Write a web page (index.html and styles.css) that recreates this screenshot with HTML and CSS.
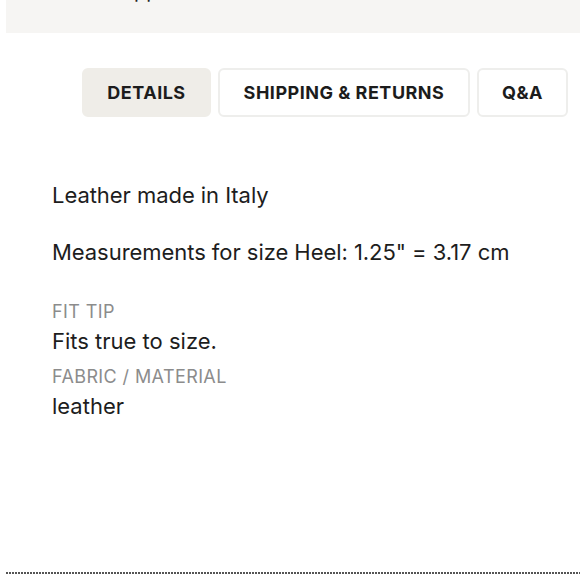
FILE: index.html
```html
<!DOCTYPE html>
<html>
<head>
<meta charset="utf-8">
<link rel="stylesheet" href="styles.css">
</head>
<body>
<div class="topband"><span class="cut">pp</span></div>
<div class="tabs">
  <div class="tab active">DETAILS</div>
  <div class="tab">SHIPPING &amp; RETURNS</div>
  <div class="tab">Q&amp;A</div>
</div>
<div class="content">
  <p class="para">Leather made in Italy</p>
  <p class="para">Measurements for size Heel: 1.25" = 3.17 cm</p>
  <div class="attr first">
    <div class="label">FIT TIP</div>
    <div class="value">Fits true to size.</div>
  </div>
  <div class="attr">
    <div class="label">FABRIC / MATERIAL</div>
    <div class="value">leather</div>
  </div>
</div>
<div class="dots"></div>
</body>
</html>
```

FILE: styles.css
```css
html, body {
  margin: 0;
  padding: 0;
  background: #ffffff;
  font-family: Inter, "Noto Sans", sans-serif;
  color: #1d1d1d;
}
.topband {
  margin-left: 6px;
  height: 33px;
  background: #f6f5f3;
  overflow: hidden;
}
.cut {
  display: block;
  margin-left: 128px;
  margin-top: -19px;
  font-size: 20px;
  line-height: 20px;
  color: #222;
}
.tabs {
  display: flex;
  gap: 7px;
  margin-top: 35px;
  padding-left: 82px;
}
.tab {
  box-sizing: border-box;
  height: 49px;
  display: flex;
  align-items: center;
  justify-content: center;
  border: 2px solid #eeeeec;
  border-radius: 6px;
  background: #fff;
  font-weight: 700;
  font-size: 18px;
  letter-spacing: 0.5px;
  color: #1c1c1c;
}
.tab.active {
  width: 129px;
  background: #efede8;
  border-color: #efede8;
}
.tab:nth-child(2) { width: 252px; }
.tab:nth-child(3) { width: 91px; }
.content {
  display: flex;
  flex-direction: column;
  padding-left: 52px;
  padding-top: 63px;
  height: 455px;
  box-sizing: border-box;
}
.para {
  margin: 0 0 27px;
  font-size: 22px;
  line-height: 30px;
  letter-spacing: -0.05px;
}
.attr.first { margin-top: 6px; }
.attr + .attr { margin-top: 6px; }
.label {
  font-size: 18px;
  line-height: 24px;
  letter-spacing: 0.4px;
  color: #8c8c8c;
}
.value {
  font-size: 22px;
  line-height: 35px;
  letter-spacing: 0;
}
.dots {
  margin-left: 6px;
  height: 2px;
  background: repeating-linear-gradient(90deg, #555 0 2px, transparent 2px 3px);
}
```
